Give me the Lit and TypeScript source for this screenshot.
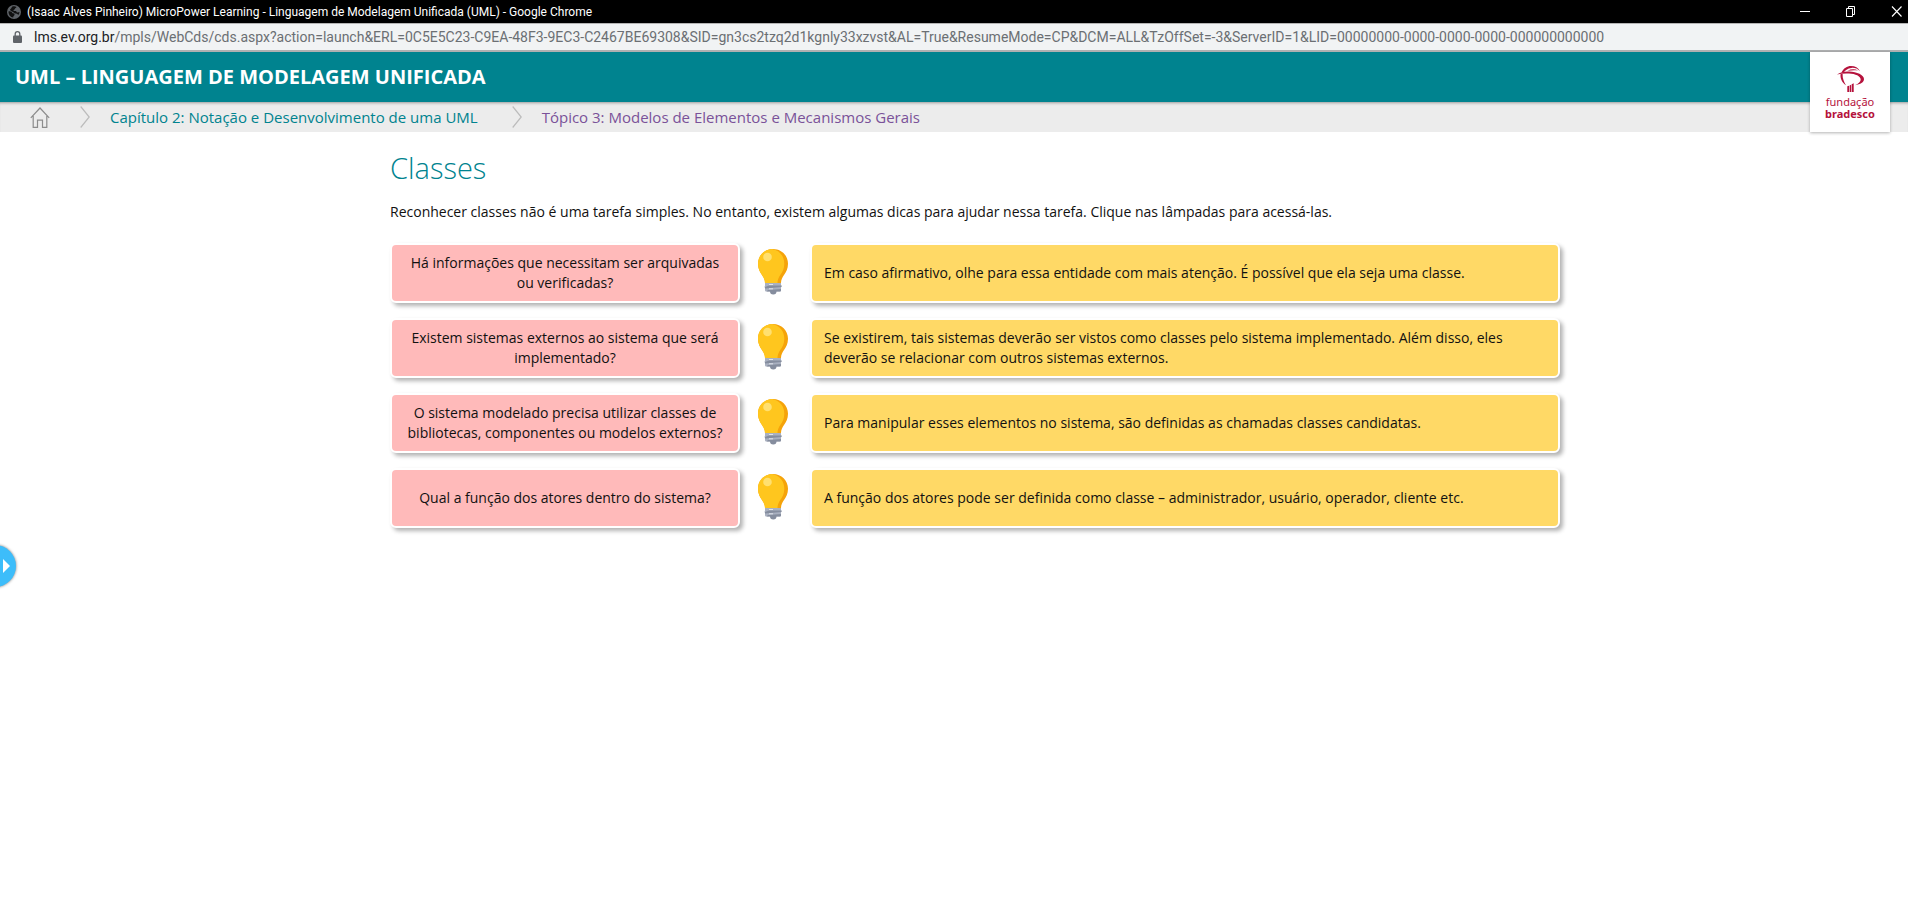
import { LitElement, html, css, svg } from "lit";
import { customElement, property } from "lit/decorators.js";

interface Tip {
  question: string;
  answer: string;
}

const TIPS: Tip[] = [
  {
    question: "Há informações que necessitam ser arquivadas ou verificadas?",
    answer:
      "Em caso afirmativo, olhe para essa entidade com mais atenção. É possível que ela seja uma classe.",
  },
  {
    question: "Existem sistemas externos ao sistema que será implementado?",
    answer:
      "Se existirem, tais sistemas deverão ser vistos como classes pelo sistema implementado. Além disso, eles deverão se relacionar com outros sistemas externos.",
  },
  {
    question:
      "O sistema modelado precisa utilizar classes de bibliotecas, componentes ou modelos externos?",
    answer:
      "Para manipular esses elementos no sistema, são definidas as chamadas classes candidatas.",
  },
  {
    question: "Qual a função dos atores dentro do sistema?",
    answer:
      "A função dos atores pode ser definida como classe – administrador, usuário, operador, cliente etc.",
  },
];

const chevron = svg`<svg width="10" height="22" viewBox="0 0 10 22" fill="none" stroke="#bcbcbc" stroke-width="1.2" aria-hidden="true"><path d="M.7.5 9.2 11 .7 21.5"/></svg>`;

@customElement("browser-bar")
export class BrowserBar extends LitElement {
  static styles = css`
    :host {
      display: block;
    }
    .title {
      display: flex;
      align-items: center;
      height: 23px;
      padding: 0 6px 0 7px;
      background: #000;
      color: #fff;
      font: 12px/16px Roboto, sans-serif;
      white-space: nowrap;
    }
    .globe {
      flex: none;
      margin-right: 6px;
    }
    .name {
      flex: 1;
      overflow: hidden;
    }
    .controls {
      display: flex;
      gap: 35px;
    }
    button {
      display: block;
      padding: 0;
      border: 0;
      background: none;
      line-height: 0;
    }
    .address {
      display: flex;
      align-items: center;
      height: 26px;
      padding-left: 13px;
      border-top: 1px solid #b4b4b4;
      border-bottom: 2px solid #afb0b1;
      background: #f1f3f4;
      color: #6b6f73;
      font: 14px/20px Roboto, sans-serif;
      white-space: nowrap;
      overflow: hidden;
    }
    .lock {
      flex: none;
      margin-right: 12px;
    }
    .host {
      color: #202124;
    }
  `;

  render() {
    return html`
      <div class="title">
        <svg class="globe" width="14" height="14" viewBox="0 0 14 14" aria-hidden="true">
          <circle cx="7" cy="7" r="7" fill="#5f6368" />
          <path
            d="M1.500 6.500C3.500 6 5 7 5.500 8.300c1.500-.3 2.300.5 2 1.600-.3.900-1.300.8-1.300 2.700C3.500 12.200 1.500 9.800 1.500 6.500ZM5 1.800c1.500-.6 3-.6 4.500.1-.5 1.100-1.500 1-1.700 2-.2.900-1.300.6-1.300 1.500 0 .8 1.200.4 2.200.7.800.3.800 1.300 1.800 1.400.8.100 1.200-.4 2-.4-.1 1.200-.5 2.200-1.200 3-.6-.8-1.200-1.300-2.300-1.500C7.500 8.300 7 7.400 6 6.900 4.800 6.300 3.200 5.800 3 4.700c.6-.9 1.500-1.200 2-2.900Z"
            fill="#101010"
          />
        </svg>
        <span class="name"
          >(Isaac Alves Pinheiro) MicroPower Learning - Linguagem de Modelagem Unificada (UML) - Google
          Chrome</span
        >
        <div class="controls">
          <button aria-label="Minimizar">
            <svg width="11" height="11" viewBox="0 0 11 11"><path d="M1 5.500h10" stroke="#fff" /></svg>
          </button>
          <button aria-label="Restaurar">
            <svg width="11" height="11" viewBox="0 0 11 11" fill="none" stroke="#fff">
              <path d="M1.500 2.500h6v8h-6zM3.500 2.500v-2h6v8h-2" />
            </svg>
          </button>
          <button aria-label="Fechar">
            <svg width="11" height="11" viewBox="0 0 11 11" stroke="#fff" stroke-width="1.1">
              <path d="m1 .5 9.500 10M10.500.5 1 10.500" />
            </svg>
          </button>
        </div>
      </div>
      <div class="address">
        <svg class="lock" width="9" height="12" viewBox="0 0 9 12" aria-hidden="true">
          <rect y="4.5" width="9" height="7.5" rx="1" fill="#5f6368" />
          <path d="M2.200 5V3a2.300 2.300 0 0 1 4.600 0v2" fill="none" stroke="#5f6368" stroke-width="1.300" />
        </svg>
        <span
          ><span class="host">lms.ev.org.br</span
          >/mpls/WebCds/cds.aspx?action=launch&amp;ERL=0C5E5C23-C9EA-48F3-9EC3-C2467BE69308&amp;SID=gn3cs2tzq2d1kgnly33xzvst&amp;AL=True&amp;ResumeMode=CP&amp;DCM=ALL&amp;TzOffSet=-3&amp;ServerID=1&amp;LID=00000000-0000-0000-0000-000000000000</span
        >
      </div>
    `;
  }
}

@customElement("course-header")
export class CourseHeader extends LitElement {
  static styles = css`
    :host {
      display: block;
      position: relative;
    }
    .banner {
      display: flex;
      align-items: center;
      height: 50px;
      padding: 0 15px;
      background: #00838f;
    }
    h1 {
      margin: 0;
      color: #fff;
      font-size: 20px;
      line-height: 28px;
      font-weight: 700;
    }
    .trail {
      display: flex;
      align-items: center;
      height: 30px;
      padding-left: 30px;
      background: #ececec;
      box-shadow: inset 0 3px 3px -2px rgba(0, 0, 0, 0.35);
      font-size: 15px;
      line-height: 20px;
    }
    svg {
      display: block;
    }
    .home {
      margin-right: 30px;
    }
    a {
      text-decoration: none;
    }
    .chapter {
      margin: 0 34px 0 20px;
      color: #00838f;
    }
    .topic {
      margin-left: 20px;
      color: #7a5299;
    }
    .logo {
      position: absolute;
      top: 0;
      right: 18px;
      display: flex;
      flex-direction: column;
      align-items: center;
      box-sizing: border-box;
      width: 80px;
      height: 80px;
      padding-top: 14px;
      background: #fff;
      box-shadow: 0 1px 3px rgba(0, 0, 0, 0.3);
      color: #b5123c;
      font: 11px/12px "Noto Sans", sans-serif;
    }
    .logo svg {
      margin-bottom: 4px;
    }
    .logo strong {
      font-weight: 700;
    }
  `;

  render() {
    return html`
      <header class="banner"><h1>UML – LINGUAGEM DE MODELAGEM UNIFICADA</h1></header>
      <nav class="trail" aria-label="Navegação">
        <a class="home" href="#inicio" aria-label="Início">
          <svg width="20" height="21" viewBox="0 0 20 21" fill="none" stroke="#8c8c8c" stroke-width="1.2">
            <path d="M.8 10.800 10 1l9.200 9.800M3.200 9v11.400h4.300v-7.200h5v7.200h4.300V9" />
          </svg>
        </a>
        ${chevron}
        <a class="chapter" href="#capitulo-2">Capítulo 2: Notação e Desenvolvimento de uma UML</a>
        ${chevron}
        <a class="topic" href="#topico-3">Tópico 3: Modelos de Elementos e Mecanismos Gerais</a>
      </nav>
      <div class="logo">
        <svg width="27" height="26" viewBox="0 0 27 26" fill="#b5123c" aria-hidden="true">
          <path
            d="M4.500 6.500C6.500 2.300 10 0 14 0c4 0 7.500 1.800 9 5.200C20.500 2.600 17.500 1.500 14.500 1.900 10.500 2.400 8 4.200 6.600 6.800Z"
          />
          <path d="M3.600 8C3 12.500 5 16.500 9 19.200 7 16 5.400 12.500 5.600 8Z" />
          <path
            d="M0 8.500C3 6.200 7.500 5.200 12 5.400 20 5.800 27 8.800 27 13c0 3.200-3.500 5.300-9 6.200 3.700-1.700 5.800-3.500 5.700-5.700C23.600 10.200 18.500 7.900 12 7.600 7.500 7.400 3.500 7.700 0 8.500Z"
          />
          <path d="M10.500 4.800C14 3 18 2.800 21 4.500 17.500 4 14 4.300 10.500 4.800Z" />
          <path d="M10.300 20.300 12 19.700V26h-1.700zM12.600 19.400l1.500-.7V26h-1.500zM14.700 18.200l2-.9V26h-2z" />
        </svg>
        <span>fundação</span>
        <strong>bradesco</strong>
      </div>
    `;
  }
}

@customElement("tip-row")
export class TipRow extends LitElement {
  @property({ attribute: false }) tip!: Tip;
  @property({ type: Boolean }) open = true;

  static styles = css`
    :host {
      display: grid;
      grid-template-columns: 7fr 34px 15fr;
      column-gap: 18px;
      align-items: stretch;
    }
    .card {
      display: flex;
      align-items: center;
      box-sizing: border-box;
      min-height: 60px;
      padding: 8px 12px;
      border: 2px solid #fff;
      border-radius: 6px;
      box-shadow: 3px 3px 4px rgba(0, 0, 0, 0.3);
    }
    .question {
      justify-content: center;
      background: #ffbaba;
      text-align: center;
    }
    .answer {
      background: #ffd966;
    }
    .hidden {
      visibility: hidden;
    }
    button {
      align-self: start;
      justify-self: start;
      margin-top: 6px;
      padding: 0;
      border: 0;
      background: none;
      line-height: 0;
      cursor: pointer;
    }
  `;

  private toggle() {
    this.open = !this.open;
  }

  render() {
    return html`
      <div class="card question">${this.tip.question}</div>
      <button aria-label="Mostrar dica" aria-expanded=${this.open} @click=${this.toggle}>
        <svg width="30" height="46" viewBox="0 0 30 46">
          <path
            d="M15 0C6.500 0 0 6.500 0 14.700c0 5 2 8.300 4 11.300 1.600 2.500 3 4.500 3 8h16c0-3.500 1.400-5.500 3-8 2-3 4-6.300 4-11.300C30 6.500 23.500 0 15 0Z"
            fill="#f5a30a"
          />
          <path
            d="M14 .1C6 .5 0 6.700 0 14.700c0 5 2 8.300 4 11.300 1.600 2.500 3 4.500 3 8h12.500c0-3.500 1.200-5.500 2.800-8 2-3 4-6.300 4-11.300C26.300 7.200 21.500 1.300 14 .1Z"
            fill="#ffc61e"
          />
          <circle cx="9.500" cy="8" r="4.300" fill="#ffe070" />
          <path d="M7 34h16v2l.5 1-.5 1.500V41c0 1-.5 1.500-1.500 1.500h-13C7.500 42.500 7 42 7 41v-2l-.5-1 .5-1.500z" fill="#a9b0c0" />
          <path d="M11 36.500h12.500v1.500L7 39.500v-1.400zM10 41l13-1v1.200c0 .8-.5 1.300-1.500 1.300h-13zM12 42.500h6.500c0 1.700-1 3.100-3.200 3.100S12 44.200 12 42.500Z" fill="#858d9e" />
          <path d="M11 35.500h4M11 39.800h4" stroke="#dfe3ea" />
        </svg>
      </button>
      <div class="card answer ${this.open ? "" : "hidden"}">${this.tip.answer}</div>
    `;
  }
}

@customElement("app-root")
export class AppRoot extends LitElement {
  static styles = css`
    :host {
      display: flex;
      flex-direction: column;
      min-height: 100vh;
      background: #fff;
      color: #111;
      font: 14px/20px "Open Sans", sans-serif;
    }
    main {
      box-sizing: border-box;
      width: 100%;
      padding: 18px 0 40px 42px;
    }
    .content {
      max-width: 1170px;
      margin: 0 auto;
    }
    h2 {
      margin: 0 0 16px;
      color: #00838f;
      font-size: 29px;
      line-height: 36px;
      font-weight: 300;
    }
    p {
      margin: 0 0 21px;
    }
    .tips {
      display: grid;
      gap: 15px;
    }
    .drawer {
      position: fixed;
      left: -26px;
      top: 545px;
      display: flex;
      align-items: center;
      justify-content: flex-end;
      width: 42px;
      height: 42px;
      padding: 0 6px 0 0;
      border: 0;
      border-radius: 50%;
      background: #3dbdfa;
      box-shadow: 0 0 3px rgba(0, 0, 0, 0.55);
      cursor: pointer;
    }
  `;

  render() {
    return html`
      <browser-bar></browser-bar>
      <course-header></course-header>
      <main>
        <div class="content">
          <h2>Classes</h2>
          <p>
            Reconhecer classes não é uma tarefa simples. No entanto, existem algumas dicas para ajudar
            nessa tarefa. Clique nas lâmpadas para acessá-las.
          </p>
          <div class="tips">${TIPS.map((tip) => html`<tip-row .tip=${tip}></tip-row>`)}</div>
        </div>
      </main>
      <button class="drawer" aria-label="Abrir menu">
        <svg width="7" height="14" viewBox="0 0 7 14"><path d="M0 0v14l7-7z" fill="#fff" /></svg>
      </button>
    `;
  }
}
